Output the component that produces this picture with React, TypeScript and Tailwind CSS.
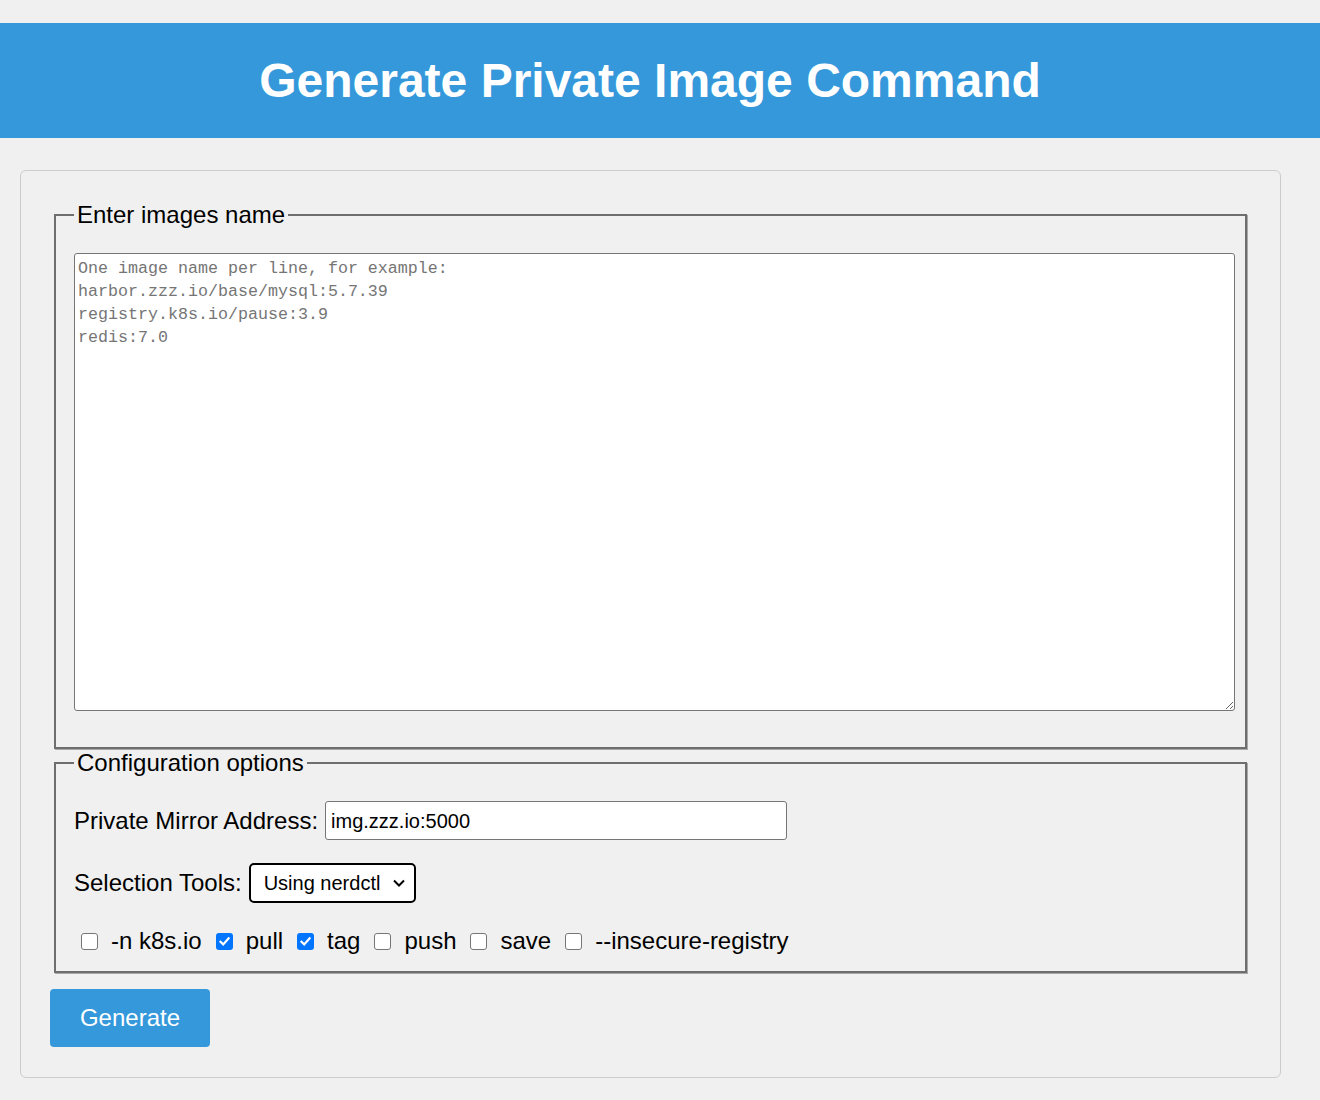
import React from "react";

function Box({ checked }: { checked?: boolean }) {
  return checked ? (
    <span className="flex h-[17px] w-[17px] shrink-0 items-center justify-center rounded-[3px] bg-[#0075ff]">
      <svg width="13" height="13" viewBox="0 0 13 13" fill="none">
        <path d="M2.5 6.8 L5.2 9.4 L10.6 3.4" stroke="white" strokeWidth="2.2" strokeLinecap="square" />
      </svg>
    </span>
  ) : (
    <span className="block h-[17px] w-[17px] shrink-0 rounded-[3px] border border-[#767676] bg-white" />
  );
}

export default function App() {
  const opts: { label: string; checked: boolean }[] = [
    { label: "-n k8s.io", checked: false },
    { label: "pull", checked: true },
    { label: "tag", checked: true },
    { label: "push", checked: false },
    { label: "save", checked: false },
    { label: "--insecure-registry", checked: false },
  ];
  return (
    <div className="min-h-screen bg-[#f0f0f0] pt-[23px] pb-[22px] font-['Liberation_Sans',Arial,sans-serif] text-black">
      <header className="flex h-[115px] items-center justify-center bg-[#3498db] pr-[20px]">
        <h1 className="text-[48px] font-bold leading-none text-white">Generate Private Image Command</h1>
      </header>
      <div className="ml-[20px] mt-[32px] w-[1261px] rounded-[6px] border border-[#cccccc] p-[30px] pb-[30px]">
        <fieldset className="mx-[3px] border-2 border-[#6e6e6e] pl-[18px] pr-[9px] pb-[36px] pt-[24px] shadow-[1px_1px_0_#a8a8a8]">
          <legend className="px-[3px] text-[24px] leading-[28px]">Enter images name</legend>
          <textarea
            className="block h-[458px] w-[1161px] rounded-[3px] border border-[#767676] bg-white pl-[3px] pt-[3px] font-['Liberation_Mono',monospace] text-[16.67px] leading-[23px] placeholder:text-[#757575]"
            placeholder={"One image name per line, for example:\nharbor.zzz.io/base/mysql:5.7.39\nregistry.k8s.io/pause:3.9\nredis:7.0"}
          />
        </fieldset>
        <fieldset className="mx-[3px] border-2 border-[#6e6e6e] px-[18px] pb-[16px] pt-[24px] shadow-[1px_1px_0_#a8a8a8]">
          <legend className="px-[3px] text-[24px] leading-[28px]">Configuration options</legend>
          <div className="flex items-center gap-[7px]">
            <span className="text-[24px]">Private Mirror Address:</span>
            <div className="flex h-[39px] w-[462px] items-center rounded-[3px] border border-[#767676] bg-white pl-[5px] text-[20px]">
              img.zzz.io:5000
            </div>
          </div>
          <div className="mt-[23px] flex items-center gap-[7px]">
            <span className="text-[24px]">Selection Tools:</span>
            <div className="flex h-[40px] w-[167px] items-center justify-between rounded-[5px] border-2 border-black bg-white pl-[13px] pr-[8px] text-[20px]">
              <span>Using nerdctl</span>
              <svg width="14" height="10" viewBox="0 0 14 10" fill="none">
                <path d="M2 2.5 L7 7.5 L12 2.5" stroke="black" strokeWidth="2" />
              </svg>
            </div>
          </div>
          <div className="mt-[24px] flex items-center pl-[7px] text-[24px]">
            {opts.map((o, i) => (
              <div key={o.label} className={"flex items-center gap-[13px] " + (i > 0 ? "ml-[14px]" : "")}>
                <Box checked={o.checked} />
                <span className="leading-[28px]">{o.label}</span>
              </div>
            ))}
          </div>
        </fieldset>
        <button className="-ml-px mt-[16px] flex h-[58px] w-[160px] items-center justify-center rounded-[4px] bg-[#3498db] text-[24px] text-white">
          Generate
        </button>
      </div>
    </div>
  );
}
